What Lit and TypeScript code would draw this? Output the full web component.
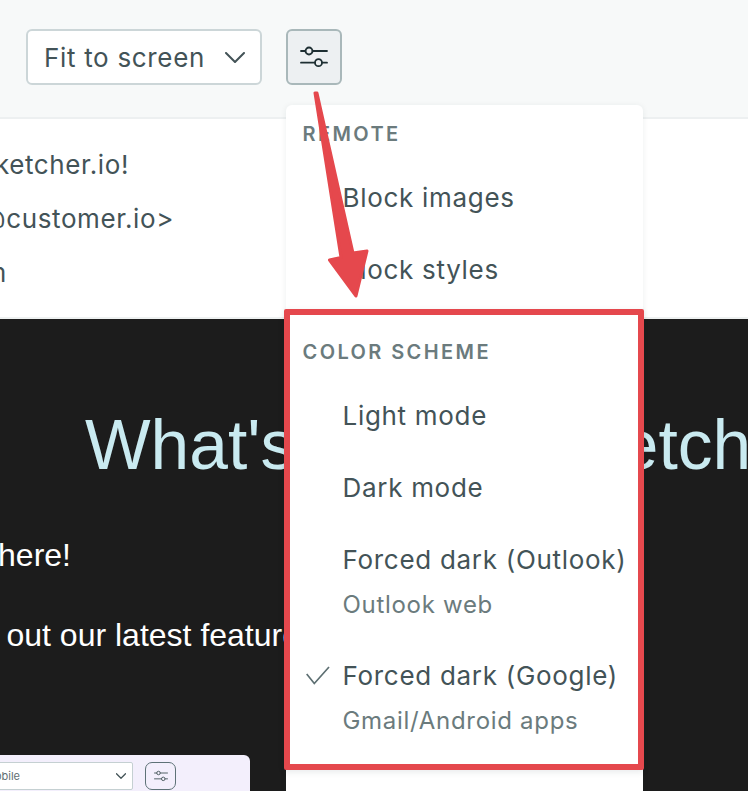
import { LitElement, html, css, svg } from "lit";
import { customElement } from "lit/decorators.js";

const sliders = svg`
  <path d="M1 5H5.500M12.500 5H27M1 16.700H15M22 16.700H27" fill="none" stroke="currentColor" stroke-width="1.800" stroke-linecap="round"/>
  <circle cx="9" cy="5" r="3.500" fill="none" stroke="currentColor" stroke-width="1.800"/>
  <circle cx="18.500" cy="16.700" r="3.500" fill="none" stroke="currentColor" stroke-width="1.800"/>`;

@customElement("app-root")
export class AppRoot extends LitElement {
  static styles = css`
    :host {
      display: block;
      position: relative;
      width: 748px;
      height: 791px;
      overflow: hidden;
      background: #1c1c1c;
      font-family: Inter, "Liberation Sans", sans-serif;
      color: #435357;
    }
    .toolbar {
      box-sizing: border-box;
      height: 119px;
      background: #f7f9f9;
      border-bottom: 2px solid #edf0f1;
      display: flex;
      align-items: flex-start;
      padding: 29px 0 0 26px;
      gap: 24px;
    }
    .select {
      box-sizing: border-box;
      width: 236px;
      height: 56px;
      background: #fff;
      border: 2px solid #ccd6d8;
      border-radius: 6px;
      display: flex;
      align-items: center;
      justify-content: space-between;
      padding: 0 15px 0 16px;
      font-size: 26px;
      letter-spacing: 0.68px;
    }
    .chev { width: 20px; height: 11px; fill: none; stroke: #435357; stroke-width: 2; stroke-linecap: round; stroke-linejoin: round; }
    .btn {
      box-sizing: border-box;
      width: 56px;
      height: 56px;
      background: #edf0f2;
      border: 2px solid #a9b8ba;
      border-radius: 6px;
      display: flex;
      align-items: center;
      justify-content: center;
      color: #1e2f33;
    }
    .btn svg { width: 28px; height: 22px; }
    .headers {
      box-sizing: border-box;
      height: 200px;
      background: #fff;
      border-bottom: 2px solid #eef1f1;
      padding-top: 19px;
      font-size: 26px;
      letter-spacing: 0.6px;
    }
    .hrow {
      width: 174px;
      height: 54px;
      line-height: 54px;
      display: flex;
      justify-content: flex-end;
      white-space: nowrap;
    }
    .hrow.first { width: 129px; }
    .hrow.last { width: 7px; }
    .mail {
      font-family: "Liberation Sans", Arial, sans-serif;
      color: #fff;
    }
    h1 {
      margin: 0;
      padding-top: 86px;
      padding-left: 85px;
      font-size: 69.500px;
      line-height: 80px;
      font-weight: 400;
      color: #c9eaf0;
      white-space: nowrap;
    }
    .para {
      margin: 50px 0 0;
      font-size: 32px;
      line-height: 40px;
      white-space: nowrap;
      display: flex;
      justify-content: flex-end;
      width: 71px;
    }
    .para.two { margin-top: 40px; width: 316px; }
    .card {
      position: absolute;
      left: 0;
      top: 755px;
      width: 250px;
      height: 60px;
      box-sizing: border-box;
      background: #f3effc;
      border-top-right-radius: 6px;
      display: flex;
      justify-content: flex-end;
      align-items: flex-start;
      gap: 12px;
      padding: 7px 74px 0 0;
    }
    .mini-select {
      box-sizing: border-box;
      flex: none;
      width: 157px;
      height: 28px;
      background: #fff;
      border: 1.500px solid #c5d0d2;
      border-radius: 2px;
      display: flex;
      align-items: center;
      justify-content: space-between;
      padding: 0 6px 0 8px;
      font-size: 11px;
      color: #5f6f72;
    }
    .mini-select .chev { width: 10px; height: 6px; stroke-width: 2.500; }
    .mini-btn {
      box-sizing: border-box;
      flex: none;
      width: 31px;
      height: 28px;
      border: 1.500px solid #5e7277;
      border-radius: 7px;
      display: flex;
      align-items: center;
      justify-content: center;
      color: #435357;
    }
    .mini-btn svg { width: 14px; height: 12px; }
    .menu {
      position: absolute;
      left: 286px;
      top: 105px;
      bottom: -20px;
      width: 357px;
      background: #fff;
      border-radius: 6px 6px 0 0;
      box-shadow: 0 1px 6px rgba(30, 50, 55, 0.08);
    }
    .section { padding: 17px 0 17px; }
    .label {
      padding-left: 16.500px;
      margin-bottom: 16px;
      font-size: 20px;
      line-height: 24px;
      font-weight: 600;
      letter-spacing: 2.4px;
      color: #6b7b7d;
    }
    .item {
      position: relative;
      padding: 18px 0 18px 56.500px;
      font-size: 26px;
      line-height: 36px;
      letter-spacing: 0.7px;
      white-space: nowrap;
    }
    .sub {
      margin-top: 10px;
      font-size: 24px;
      line-height: 34px;
      letter-spacing: 0.7px;
      color: #6b7b7d;
    }
    .check {
      position: absolute;
      left: 20px;
      top: 26px;
      width: 24px;
      height: 20px;
      fill: none;
      stroke: #5d6f72;
      stroke-width: 1.700;
    }
    .box {
      position: absolute;
      left: 284px;
      top: 309px;
      width: 360px;
      height: 461px;
      box-sizing: border-box;
      border: 6px solid #e5484d;
      border-radius: 2px;
      box-shadow: 0 2px 6px rgba(30, 50, 55, 0.1);
    }
    .arrow {
      position: absolute;
      inset: 0;
      width: 748px;
      height: 791px;
      pointer-events: none;
    }
    .arrow polygon { fill: #e5484d; stroke: #e5484d; stroke-width: 3; stroke-linejoin: round; }
  `;

  private item(title: string, sub = "", checked = false) {
    return html`<div class="item">
      ${checked
        ? html`<svg class="check" viewBox="0 0 24 20"><path d="M0.700 8L8.300 17.500L23 1" /></svg>`
        : ""}
      <div>${title}</div>
      ${sub ? html`<div class="sub">${sub}</div>` : ""}
    </div>`;
  }

  render() {
    return html`
      <div class="toolbar">
        <div class="select">
          <span>Fit to screen</span>
          <svg class="chev" viewBox="0 0 20 11"><path d="M1 1L10 10L19 1" /></svg>
        </div>
        <div class="btn"><svg viewBox="0 0 28 22">${sliders}</svg></div>
      </div>
      <div class="headers">
        <div class="hrow first">Sketcher.io!</div>
        <div class="hrow">&lt;hello@customer.io&gt;</div>
        <div class="hrow last">m</div>
      </div>
      <div class="mail">
        <h1>What's new at Sketcher</h1>
        <div class="para">here!</div>
        <div class="para two">Check out our latest features</div>
      </div>
      <div class="card">
        <div class="mini-select">
          <span>Mobile</span>
          <svg class="chev" viewBox="0 0 20 11"><path d="M1 1L10 10L19 1" /></svg>
        </div>
        <div class="mini-btn"><svg viewBox="0 0 28 22">${sliders}</svg></div>
      </div>
      <div class="menu">
        <div class="section">
          <div class="label">REMOTE</div>
          ${this.item("Block images")}
          ${this.item("Block styles")}
        </div>
        <div class="section">
          <div class="label">COLOR SCHEME</div>
          ${this.item("Light mode")}
          ${this.item("Dark mode")}
          ${this.item("Forced dark (Outlook)", "Outlook web")}
          ${this.item("Forced dark (Google)", "Gmail/Android apps", true)}
        </div>
      </div>
      <div class="box"></div>
      <svg class="arrow" viewBox="0 0 748 791">
        <polygon points="315,93 317,93 353,253 367,251 356,296 329.500,260 341,257.500" />
      </svg>
    `;
  }
}
